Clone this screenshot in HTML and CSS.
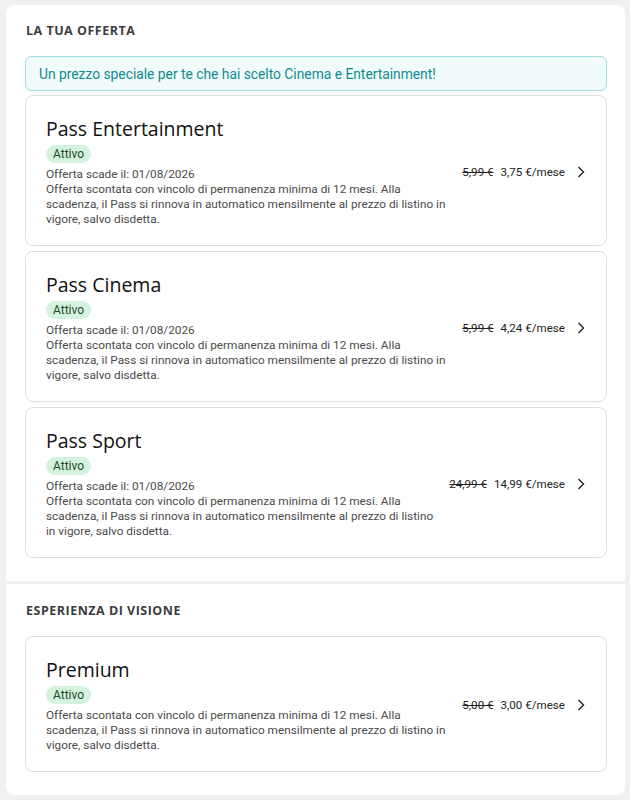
FILE: index.html
```html
<!DOCTYPE html>
<html lang="it">
<head>
<meta charset="utf-8">
<link rel="stylesheet" href="styles.css">
</head>
<body>
<div class="page">
  <section class="panel first">
    <h2 class="section-title">LA TUA OFFERTA</h2>
    <div class="banner">Un prezzo speciale per te che hai scelto Cinema e Entertainment!</div>
    <div class="cards">
      <div class="card">
        <div class="info">
          <div class="title">Pass Entertainment</div>
          <span class="badge">Attivo</span>
          <p class="desc">Offerta scade il: 01/08/2026<br>Offerta scontata con vincolo di permanenza minima di 12 mesi. Alla scadenza, il Pass si rinnova in automatico mensilmente al prezzo di listino in vigore, salvo disdetta.</p>
        </div>
        <div class="price"><s>5,99 €</s><span>3,75 €/mese</span></div>
        <svg class="chev" width="8" height="12" viewBox="0 0 8 12"><path d="M1.5 1l5 5-5 5" fill="none" stroke="#222" stroke-width="1.4"/></svg>
      </div>
      <div class="card">
        <div class="info">
          <div class="title">Pass Cinema</div>
          <span class="badge">Attivo</span>
          <p class="desc">Offerta scade il: 01/08/2026<br>Offerta scontata con vincolo di permanenza minima di 12 mesi. Alla scadenza, il Pass si rinnova in automatico mensilmente al prezzo di listino in vigore, salvo disdetta.</p>
        </div>
        <div class="price"><s>5,99 €</s><span>4,24 €/mese</span></div>
        <svg class="chev" width="8" height="12" viewBox="0 0 8 12"><path d="M1.5 1l5 5-5 5" fill="none" stroke="#222" stroke-width="1.4"/></svg>
      </div>
      <div class="card">
        <div class="info">
          <div class="title">Pass Sport</div>
          <span class="badge">Attivo</span>
          <p class="desc">Offerta scade il: 01/08/2026<br>Offerta scontata con vincolo di permanenza minima di 12 mesi. Alla scadenza, il Pass si rinnova in automatico mensilmente al prezzo di listino in vigore, salvo disdetta.</p>
        </div>
        <div class="price"><s>24,99 €</s><span>14,99 €/mese</span></div>
        <svg class="chev" width="8" height="12" viewBox="0 0 8 12"><path d="M1.5 1l5 5-5 5" fill="none" stroke="#222" stroke-width="1.4"/></svg>
      </div>
    </div>
  </section>
  <section class="panel second">
    <h2 class="section-title">ESPERIENZA DI VISIONE</h2>
    <div class="cards">
      <div class="card">
        <div class="info">
          <div class="title">Premium</div>
          <span class="badge">Attivo</span>
          <p class="desc">Offerta scontata con vincolo di permanenza minima di 12 mesi. Alla scadenza, il Pass si rinnova in automatico mensilmente al prezzo di listino in vigore, salvo disdetta.</p>
        </div>
        <div class="price"><s>5,00 €</s><span>3,00 €/mese</span></div>
        <svg class="chev" width="8" height="12" viewBox="0 0 8 12"><path d="M1.5 1l5 5-5 5" fill="none" stroke="#222" stroke-width="1.4"/></svg>
      </div>
    </div>
  </section>
</div>
</body>
</html>
```
FILE: styles.css
```css
html, body {
  margin: 0;
  padding: 0;
  background: #eff0f2;
  font-family: Roboto, "Liberation Sans", sans-serif;
  color: #222;
}
.page {
  padding: 5px 5px 0 6px;
  display: flex;
  flex-direction: column;
  gap: 3px;
}
.panel {
  background: #fff;
  padding: 18px 18px 23px 19px;
}
.panel.first {
  border-radius: 8px 8px 0 0;
}
.panel.second {
  padding-top: 19px;
  border-radius: 0 0 8px 8px;
}
.section-title {
  margin: 0 0 17px 1px;
  font-family: "Open Sans", sans-serif;
  font-size: 12.5px;
  line-height: 16px;
  font-weight: 700;
  letter-spacing: 0.5px;
  color: #3d3d3d;
}
.banner {
  border: 1px solid #a6dde2;
  background: #f1fbfb;
  border-radius: 6px;
  padding: 0 13px;
  height: 33px;
  display: flex;
  align-items: center;
  font-size: 13.8px;
  color: #0f8b8f;
  margin-bottom: 4px;
}
.cards {
  display: flex;
  flex-direction: column;
  gap: 5px;
}
.card {
  border: 1px solid #dedede;
  border-radius: 8px;
  padding: 20px 21px 18px 20px;
  display: flex;
  align-items: center;
}
.info {
  flex: 1;
  min-width: 0;
  padding-right: 10px;
  display: flex;
  flex-direction: column;
  align-items: flex-start;
}
.title {
  font-family: "Open Sans", sans-serif;
  font-size: 19.5px;
  line-height: 26px;
  color: #111;
  margin-bottom: 3px;
}
.badge {
  display: block;
  background: #d5f2de;
  color: #1c4a2a;
  font-size: 12px;
  line-height: 18px;
  padding: 0 7px;
  border-radius: 9px;
}
.desc {
  margin: 4px 0 0;
  font-size: 11.8px;
  line-height: 15px;
  color: #4a4a4a;
}
.price {
  font-size: 11.6px;
  color: #222;
  display: flex;
  gap: 7px;
  white-space: nowrap;
}
.price s {
  text-decoration-thickness: 1px;
}
.chev {
  margin-left: 12px;
  flex: none;
}
```
